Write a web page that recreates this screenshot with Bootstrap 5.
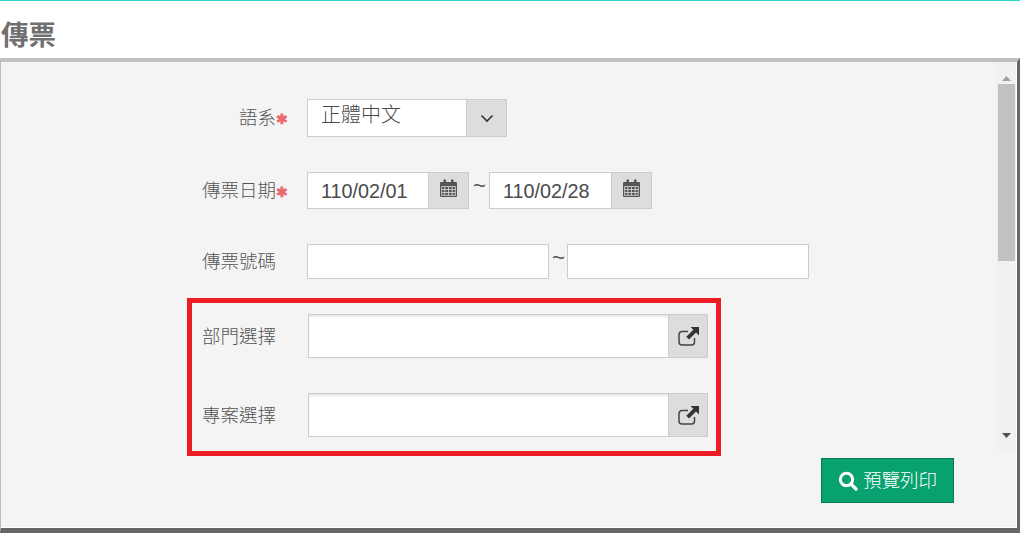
<!DOCTYPE html>
<html lang="zh-Hant"><head><meta charset="utf-8">
<link href="https://cdn.jsdelivr.net/npm/bootstrap@5.3.0/dist/css/bootstrap.min.css" rel="stylesheet">
<style>
html,body{height:533px;overflow:hidden;background:#fff}
body{font-family:"Liberation Sans","Noto Sans CJK TC",sans-serif;font-weight:300;color:#555;font-size:18.5px;border-top:1px solid #2ed8c8}
.head-bar{height:57px;padding:19px 0 0 1px;font-size:27.500px;font-weight:700;line-height:32px;color:#707070}
.sheet{height:475px;border-top:4px solid #c0c0c0;border-left:1px solid #bbb;border-bottom:5px solid #666;border-right:3px solid #666;background:#f4f4f4;box-shadow:inset -1px -1px 0 #fff}
.form-area{width:995px;height:390px;padding-top:37px}
.vbar{width:20px;height:390px;background:#f1f1f1;padding:0 1px 0 2px}
.vthumb{height:177px;margin-top:3px;background:#c1c1c1}
.varrow{height:19px}
.fr-a{height:38px;margin-bottom:35px}
.fr-b{height:37px;margin-bottom:35px}
.fr-c{height:35px;margin-bottom:19px}
.lbl{width:275px;flex:none;text-align:right;line-height:38px}
.fr-c .lbl{line-height:35px}
.lbl-s{width:286px}
.req{color:#e8686c;font-size:14px;font-weight:700;display:inline-block;width:11px;text-align:center}
.fld{height:100%;border:1px solid #ccc;background:#fff;display:flex;color:#4a4a4a}
.w-lang{width:200px}.w-d1{width:162px}.w-d2{width:163px}.w-no{width:242px}
.fld-txt{flex:1;padding-left:13px;line-height:36px;font-size:19.800px}
.fld-cjk{font-size:20px;line-height:31px}
.addon{width:40px;flex:none;background:#ddd;border-left:1px solid #ccc;display:flex;align-items:center;justify-content:center}
.cal-ic{margin-bottom:5px}
.gap-l{width:20px;flex:none}
.gap-m{width:31px;flex:none}
.tilde{width:20px;padding-left:1px;text-align:center;line-height:28px;flex:none;color:#555;font-size:22px}
.tilde-n{width:18px}
.mark-box{width:534px;height:158px;margin-left:186px;border:5px solid #ed1c24;padding:11px 8px 0 10px}
.mark-box .fr-m{height:44px;margin-bottom:35px}
.mark-box .fld{box-shadow:inset 0 3px 2px -1px #e6e6e6}
.mark-box .lbl{width:106px;text-align:left;line-height:46px}
.mark-box .addon{width:39px}
.go-btn{background:#07a26f;border:1px solid #067a56;color:#fff;width:133px;height:45px;font-size:18.5px;font-weight:300;margin:6px 0 0 820px;display:flex;align-items:center;justify-content:center;gap:5px;border-radius:0;padding:0}
</style></head><body>
<div class="head-bar">傳票</div>
<div class="sheet">
<div class="d-flex">
<div class="form-area">
 <div class="fr-a d-flex"><div class="lbl lbl-s">語系<span class="req">✱</span></div><div class="gap-l"></div>
  <div class="fld w-lang"><div class="fld-txt fld-cjk">正體中文</div><div class="addon"><svg width="14" height="9" viewBox="0 0 14 9"><path d="M1.500 1.500 7 7l5.500-5.500" fill="none" stroke="#333" stroke-width="1.600"/></svg></div></div></div>
 <div class="fr-b d-flex"><div class="lbl lbl-s">傳票日期<span class="req">✱</span></div><div class="gap-l"></div>
  <div class="fld w-d1"><div class="fld-txt">110/02/01</div><div class="addon"><svg class="cal-ic" width="17" height="18" viewBox="0 0 17 18"><path fill="#555" d="M1 3h2.500V.500h2.500V3h5V.500h2.500V3H16a1 1 0 0 1 1 1v13a1 1 0 0 1-1 1H1a1 1 0 0 1-1-1V4a1 1 0 0 1 1-1z"/><path fill="none" stroke="#ddd" stroke-width=".8" d="M1.500 7.500h14M1.500 10.500h14M1.500 13.500h14M1.500 16.300h14M1.700 7.500v9M4.800 7.500v9M8.500 7.500v9M12.200 7.500v9M15.300 7.500v9"/></svg></div></div>
  <div class="tilde">~</div>
  <div class="fld w-d2"><div class="fld-txt">110/02/28</div><div class="addon"><svg class="cal-ic" width="17" height="18" viewBox="0 0 17 18"><path fill="#555" d="M1 3h2.500V.500h2.500V3h5V.500h2.500V3H16a1 1 0 0 1 1 1v13a1 1 0 0 1-1 1H1a1 1 0 0 1-1-1V4a1 1 0 0 1 1-1z"/><path fill="none" stroke="#ddd" stroke-width=".8" d="M1.500 7.500h14M1.500 10.500h14M1.500 13.500h14M1.500 16.300h14M1.700 7.500v9M4.800 7.500v9M8.500 7.500v9M12.200 7.500v9M15.300 7.500v9"/></svg></div></div></div>
 <div class="fr-c d-flex"><div class="lbl">傳票號碼</div><div class="gap-m"></div>
  <div class="fld w-no"></div><div class="tilde tilde-n">~</div><div class="fld w-no"></div></div>
 <div class="mark-box">
  <div class="fr-m d-flex"><div class="lbl">部門選擇</div><div class="fld flex-fill"><div class="fld-txt"></div><div class="addon"><svg width="21" height="19" viewBox="0 0 21 19"><path d="M16.500 11v4a3 3 0 0 1-3 3H4a3 3 0 0 1-3-3V7.500a3 3 0 0 1 3-3h6" fill="none" stroke="#444" stroke-width="1.500"/><path fill="#333" d="M12.500 0H21v8.500l-3-3-7 7-2.700-2.700 7-7z"/></svg></div></div></div>
  <div class="fr-m d-flex"><div class="lbl">專案選擇</div><div class="fld flex-fill"><div class="fld-txt"></div><div class="addon"><svg width="21" height="19" viewBox="0 0 21 19"><path d="M16.500 11v4a3 3 0 0 1-3 3H4a3 3 0 0 1-3-3V7.500a3 3 0 0 1 3-3h6" fill="none" stroke="#444" stroke-width="1.500"/><path fill="#333" d="M12.500 0H21v8.500l-3-3-7 7-2.700-2.700 7-7z"/></svg></div></div></div>
 </div>
</div>
<div class="vbar d-flex flex-column">
 <div class="varrow d-flex justify-content-center align-items-end"><svg width="9" height="5" viewBox="0 0 9 5"><path d="M4.500 0 9 5H0z" fill="#a0a0a0"/></svg></div>
 <div class="vthumb"></div>
 <div class="flex-fill"></div>
 <div class="varrow d-flex justify-content-center align-items-start"><svg width="9" height="5" viewBox="0 0 9 5"><path d="M0 0h9L4.500 5z" fill="#505050"/></svg></div>
</div>
</div>
<button type="button" class="btn go-btn"><svg width="20" height="20" viewBox="0 0 20 20"><circle cx="8.500" cy="8.500" r="6.200" fill="none" stroke="#fff" stroke-width="3"/><path d="M13 13l5 5" stroke="#fff" stroke-width="3.200" stroke-linecap="round"/></svg>預覽列印</button>
</div>
</body></html>
